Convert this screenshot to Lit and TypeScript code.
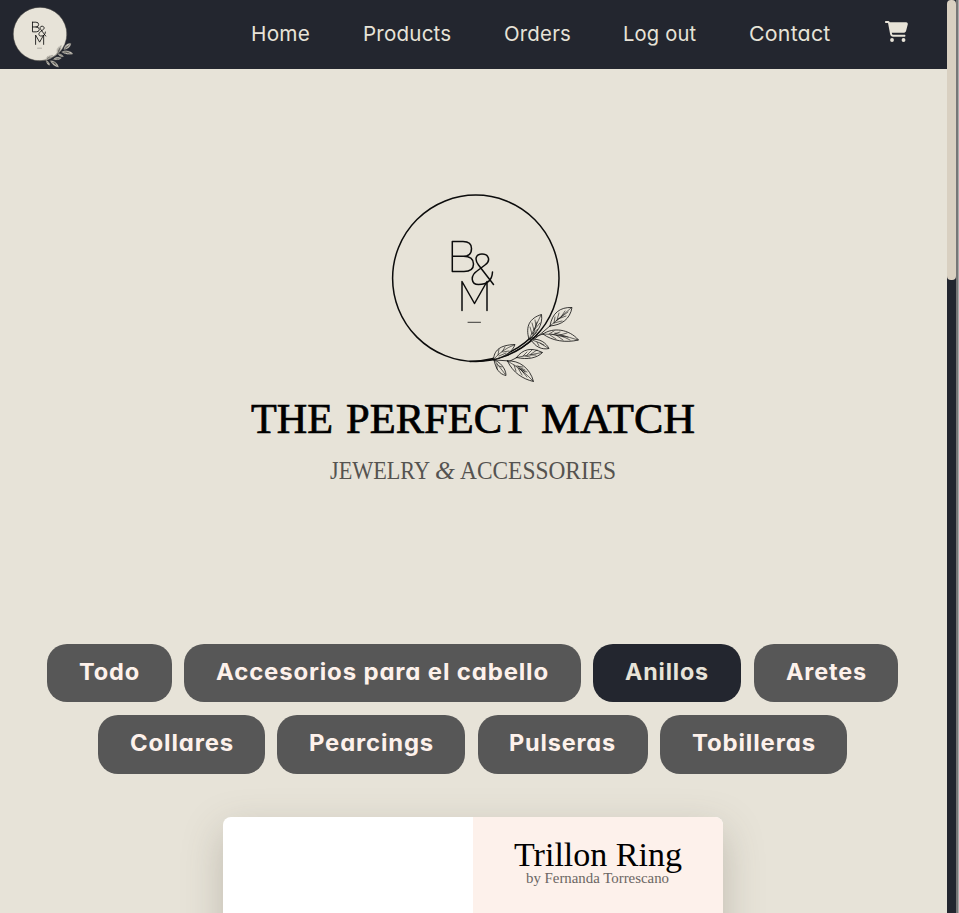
import { LitElement, html, svg, css } from "lit";
import { customElement, property } from "lit/decorators.js";

/** A run of text set to an exact measure, whatever face is available. */
@customElement("fit-text")
class FitText extends LitElement {
  @property() text = "";
  @property({ type: Number }) width = 100;
  @property({ type: Number }) height = 30;
  @property({ type: Number }) baseline = 20;

  static styles = css`
    :host { display: block; flex: none; }
    svg { display: block; overflow: visible; }
    text { fill: currentColor; }
  `;

  render() {
    return html`<svg width=${this.width} height=${this.height}>
      <text x="0" y=${this.baseline} textLength=${this.width} lengthAdjust="spacingAndGlyphs">${this.text}</text>
    </svg>`;
  }
}

/** Monogram inside a ring, with a leafy branch at the lower right. */
@customElement("brand-mark")
class BrandMark extends LitElement {
  @property({ type: Boolean, reflect: true }) filled = false;

  static styles = css`
    :host { display: block; }
    svg { display: block; width: 100%; height: 100%; overflow: visible; }
    .ink { fill: none; stroke: #0c0c0c; stroke-linecap: round; stroke-linejoin: round; }
    .ring { stroke-width: 1.5; }
    .letters { stroke-width: 1.5; }
    .thin { stroke-width: 0.8; }
    .leaf { fill: #e7e3d8; }
    .vein { stroke-width: 0.6; }
    .disc { fill: #e7e3d8; }
    :host([filled]) .letters { stroke-width: 2.6; }
    :host([filled]) .leaf { fill: #dcd8cd; stroke: #9a978f; }
    :host([filled]) .vein { stroke-width: 0.7; }
    :host([filled]) .ring { stroke: #55544f; }
  `;

  render() {
    const leaves = [
      "M113.5 174.500C114 166 119 160 135 159.500C133 166 125 172 113.500 174.500Z",
      "M114 175C119 176 126 183 126 190.500C119 189 116 184 114 175Z",
      "M136.500 172.500C143 164 151 162 162.500 167.500C157 173 148 175 136.500 172.500Z",
      "M127.500 176C139 175 150 183 153.500 196.500C143 194 133 188 127.500 176Z",
      "M149 154C145 141 150 133 161.500 129.500C163 140 157 148 149 154Z",
      "M151 154.500C160 153 166 158 169 163.500C162 165 155 162 151 154.500Z",
      "M170 141C172 128 180 122 192 122.500C190 134 182 140 170 141Z",
      "M163 149C173 142 189 144 198.500 155C186 158 172 156 163 149Z",
    ];
    const veins = [
      "M113.500 174.500C119 168 126 163 134 160M118 170L119 164M122 167L125 162M119 171L126 168M123 167L129 166",
      "M114 175Q119 181 125 189M117 179L117 184M119 181L122 182",
      "M136.500 172.500Q149 170 162 167.500M143 171L147 167M147 170L152 165M151 169L157 165M145 171L150 172M150 170L156 170",
      "M127.500 176Q142 184 153 196M134 180L136 186M138 183L142 190M142 186L147 192M136 181L143 182M140 184L147 187M138 181L145 187M139 183L144 188M141 183L145 185",
      "M149 154Q155 143 161 130M152 149L150 142M154 145L152 138M156 141L155 135M152 149L158 144M154 145L160 138M153 150L157 137",
      "M151 154.500Q160 157 168 163M157 157L159 161M160 158L164 160",
      "M170 141Q181 132 191 123M174 138L175 132M177 135L179 128M181 132L185 126M174 138L182 136M178 134L186 131M176 136L188 127",
      "M163 149Q181 149 198 155M169 149L174 146M174 149L180 147M180 150L187 148M170 150L176 154M176 150L183 155M182 151L190 155M171 149L184 152M175 148L188 152",
    ];
    return html`<svg viewBox="0 0 210 205" role="img" aria-label="B&M">
      ${this.filled ? svg`<circle class="disc" cx="95.8" cy="93.500" r="83" />` : ""}
      <circle class="ink ring" cx="95.8" cy="93.300" r="83.200" />
      <path class="ink ring" d="M90 176.400C122 176.500 145 160 156 147" />
      <path class="ink thin" d="M113 175Q140 169 170 141M115 175L130 176L137 172.500M149 154L163 149" />
      <g class="ink letters">
        <path d="M72.300 56.500H83Q91.500 56.500 91.500 63.500Q91.500 71.300 83.500 71.300H72.300M83.500 71.300Q93.500 71.500 93.500 79Q93.500 86.500 84 86.500H72.300V56.500" />
        <path d="M113.500 99.500L98.500 80C94 74 96 69 102 69C109 69 111 76 105 80L97 86C90 91 91 99.500 98.500 99.500C107 99.500 112 96 112.500 87" />
        <path d="M82 125.500V96.500L94.500 118.500L107 96.500V125.500" />
      </g>
      <path class="ink thin" d="M88 137.300H100.500" />
      ${leaves.map((d) => svg`<path class="ink thin leaf" d=${d} />`)}
      ${veins.map((d) => svg`<path class="ink vein" d=${d} />`)}
    </svg>`;
  }
}

@customElement("app-root")
class AppRoot extends LitElement {
  static styles = css`
    :host {
      display: flex; width: 959px; height: 913px; overflow: hidden;
      background: #e7e3d8; color: #000;
      font-family: "Liberation Serif", serif;
    }
    .page { width: 947px; flex: none; height: 913px; overflow: hidden; }
    .bar {
      display: flex; height: 69px; box-sizing: border-box; background: #23262f;
      color: #e7e3d8; padding-left: 9px;
    }
    .small-logo { width: 68px; height: 66px; margin-top: 4px; }
    .links {
      display: flex; gap: 52.600px; margin-left: 174px; padding-top: 14px;
      font: 400 20.500px Inter, sans-serif; font-feature-settings: "cv11"; letter-spacing: 0.2px;
    }
    .cart { margin: 21px 0 0 54px; width: 23px; height: 21px; }
    .cart svg { display: block; }
    .hero { display: flex; flex-direction: column; align-items: center; height: 575px; }
    .logo { width: 210px; height: 205px; margin: 116px 0 0 23px; }
    .title {
      display: flex; gap: 13px; margin-right: 2px;
      font: 400 42.500px "Liberation Serif", serif; stroke: #000; stroke-width: 0.7px;
    }
    .sub {
      display: flex; gap: 5px; margin: 13px 2px 0 0; color: #555350;
      font: 400 24.500px "Liberation Serif", serif;
    }
    .amp { font-style: italic; }
    .cats { display: flex; flex-direction: column; gap: 13px; }
    .row { display: flex; gap: 12px; margin-left: 47px; }
    .row:not(.second) .cat:last-child { margin-left: 1px; }
    .row.second { margin-left: 98px; gap: 12.300px; }
    .cat {
      height: 58px; border-radius: 20px; background: #575757; color: #fdf1eb;
      display: flex; justify-content: center; box-sizing: border-box; padding-left: 0.500px;
      font: 700 22.500px Inter, sans-serif; font-feature-settings: "cv11"; letter-spacing: 0.8px;
    }
    .second .cat { height: 59px; }
    .cat.on { background: #23262f; color: #e7e3d8; }
    .card {
      display: flex; width: 500px; height: 300px; margin: 43px 0 0 223px;
      border-radius: 8px; background: #fff;
      box-shadow: 0 14px 40px rgba(80, 75, 60, 0.26);
    }
    .photo { width: 250px; }
    .info {
      width: 250px; background: #fdf1eb; border-radius: 0 8px 8px 0; box-sizing: border-box;
      padding-top: 20px; display: flex; flex-direction: column; align-items: center;
    }
    .name { font: 400 33px "Liberation Serif", serif; }
    .by { font: 400 14.500px "Liberation Serif", serif; color: #6b6663; margin-right: 1px; }
    .scroll { width: 9px; height: 913px; background: #23262f; }
    .thumb { height: 280px; border-radius: 4px; background: #d9d0c1; }
    .edge { width: 2px; background: #777; }
    .rim { width: 1px; background: #aaa; }
  `;

  private links: [string, number][] = [
    ["Home", 59], ["Products", 88.4], ["Orders", 67], ["Log out", 73.4], ["Contact", 81.5],
  ];
  private first: [string, number, number][] = [
    ["Todo", 125, 61], ["Accesorios para el cabello", 397, 333], ["Anillos", 148, 84], ["Aretes", 144, 81],
  ];
  private second: [string, number, number][] = [
    ["Collares", 167, 104], ["Pearcings", 188, 125], ["Pulseras", 170, 107], ["Tobilleras", 187, 124],
  ];

  private cat([name, box, width]: [string, number, number], baseline: number) {
    return html`<div class="cat ${name === "Anillos" ? "on" : ""}" style="width:${box}px">
      <fit-text .text=${name} .width=${width} .height=${50} .baseline=${baseline}></fit-text>
    </div>`;
  }

  render() {
    return html`
      <div class="page">
        <header class="bar">
          <brand-mark class="small-logo" filled></brand-mark>
          <nav class="links">
            ${this.links.map(([t, w]) => html`<fit-text .text=${t} .width=${w} .height=${30} .baseline=${27}></fit-text>`)}
          </nav>
          <div class="cart">
            <svg width="23" height="21" viewBox="0 0 576 512" preserveAspectRatio="none" fill="#e7e3d8">
              <path d="M0 24C0 10.700 10.700 0 24 0H69.500c22 0 41.500 12.800 50.600 32h411c26.300 0 45.500 25 38.600 50.400l-41 152.300c-8.500 31.400-37 53.300-69.500 53.300H170.700l5.400 28.500c2.200 11.300 12.100 19.500 23.600 19.500H488c13.300 0 24 10.700 24 24s-10.700 24-24 24H199.700c-34.600 0-64.300-24.600-70.700-58.500L77.400 54.500c-.7-3.800-4-6.500-7.900-6.500H24C10.700 48 0 37.300 0 24zM128 464a48 48 0 1 1 96 0 48 48 0 1 1-96 0zm336-48a48 48 0 1 1 0 96 48 48 0 1 1 0-96z" />
            </svg>
          </div>
        </header>
        <section class="hero">
          <brand-mark class="logo"></brand-mark>
          <div class="title">
            <fit-text .text=${"THE"} .width=${82} .height=${55} .baseline=${43}></fit-text>
            <fit-text .text=${"PERFECT"} .width=${182} .height=${55} .baseline=${43}></fit-text>
            <fit-text .text=${"MATCH"} .width=${154} .height=${55} .baseline=${43}></fit-text>
          </div>
          <div class="sub">
            <fit-text .text=${"JEWELRY"} .width=${100} .height=${30} .baseline=${21}></fit-text>
            <fit-text class="amp" .text=${"&"} .width=${20} .height=${30} .baseline=${21}></fit-text>
            <fit-text .text=${"ACCESSORIES"} .width=${156} .height=${30} .baseline=${21}></fit-text>
          </div>
        </section>
        <section class="cats">
          <div class="row">${this.first.map((c) => this.cat(c, 36))}</div>
          <div class="row second">${this.second.map((c) => this.cat(c, 36))}</div>
        </section>
        <article class="card">
          <div class="photo"></div>
          <div class="info">
            <fit-text class="name" .text=${"Trillon Ring"} .width=${168} .height=${34} .baseline=${29}></fit-text>
            <fit-text class="by" .text=${"by Fernanda Torrescano"} .width=${143} .height=${20} .baseline=${12}></fit-text>
          </div>
        </article>
      </div>
      <div class="scroll"><div class="thumb"></div></div>
      <div class="edge"></div>
      <div class="rim"></div>
    `;
  }
}
